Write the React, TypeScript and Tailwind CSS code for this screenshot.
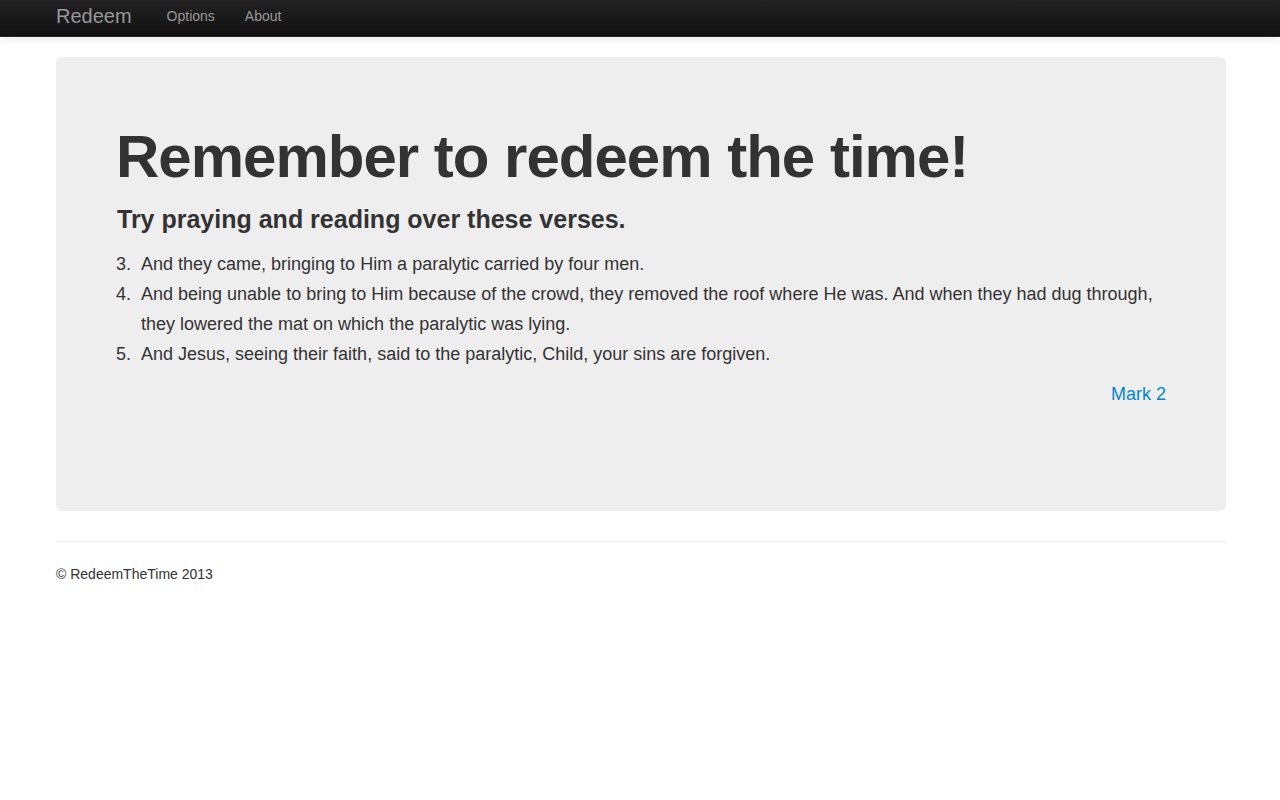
const font = { fontFamily: '"Liberation Sans", Arial, Helvetica, sans-serif' }

const verses = [
  { n: 3, text: 'And they came, bringing to Him a paralytic carried by four men.' },
  {
    n: 4,
    text: 'And being unable to bring to Him because of the crowd, they removed the roof where He was. And when they had dug through, they lowered the mat on which the paralytic was lying.',
  },
  { n: 5, text: 'And Jesus, seeing their faith, said to the paralytic, Child, your sins are forgiven.' },
]

function Navbar() {
  return (
    <div className="h-[37px] border-b border-[#252525] bg-gradient-to-b from-[#222222] to-[#111111] shadow-[0_1px_10px_rgba(0,0,0,0.1)]">
      <div className="ml-[56px] flex h-[36px] w-[1170px] items-center pb-1">
        <a className="pr-5 text-[20px] leading-5 text-[#999999]">Redeem</a>
        <a className="px-[15px] text-[14px] leading-5 text-[#999999]">Options</a>
        <a className="px-[15px] text-[14px] leading-5 text-[#999999]">About</a>
      </div>
    </div>
  )
}

export default function App() {
  return (
    <div className="min-h-screen bg-white text-[#333333]" style={font}>
      <Navbar />

      <div className="ml-[56px] w-[1170px] pt-5">
        <div className="rounded-md bg-[#eeeeee] px-[60px] pt-[60px] pb-[102px] text-[18px] leading-[30px]">
          <h1 className="mt-[10px] text-[60px] font-bold leading-[60px] tracking-[-1px]">
            Remember to redeem the time!
          </h1>
          <h3 className="mt-[12px] mb-[10px] pl-px text-[25px] font-bold leading-[40px]">
            Try praying and reading over these verses.
          </h3>
          <ol className="mb-[10px]">
            {verses.map((v) => (
              <li key={v.n} className="flex">
                <span className="w-[25px] shrink-0">{v.n}.</span>
                <span>{v.text}</span>
              </li>
            ))}
          </ol>
          <p className="text-right">
            <a className="text-[#0088cc]">Mark 2</a>
          </p>
        </div>

        <hr className="mt-[30px] border-t border-[#eeeeee]" />

        <footer className="pt-[22px]">
          <p className="text-[14px] leading-5">© RedeemTheTime 2013</p>
        </footer>
      </div>
    </div>
  )
}
